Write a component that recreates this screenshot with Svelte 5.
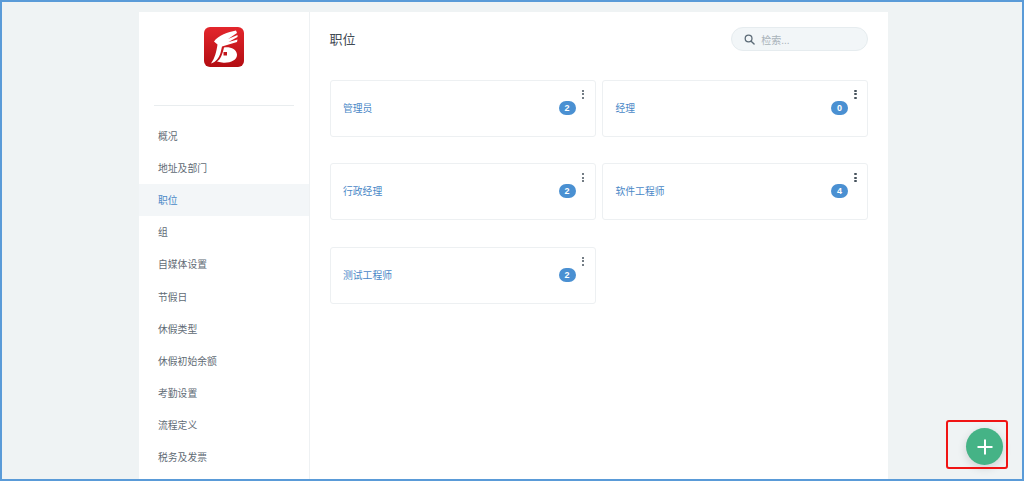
<script>
  const menu = ['概况', '地址及部门', '职位', '组', '自媒体设置', '节假日', '休假类型', '休假初始余额', '考勤设置', '流程定义', '税务及发票'];
  const cards = [
    ['管理员', 2], ['经理', 0], ['行政经理', 2], ['软件工程师', 4], ['测试工程师', 2]
  ];
</script>

<div class="frame">
  <div class="panel">
    <aside class="side">
      <div class="logo-wrap">
        <svg class="logo" viewBox="0 0 40 40" width="40" height="40" aria-hidden="true">
          <defs>
            <linearGradient id="lg" x1="0" y1="0" x2="0" y2="1">
              <stop offset="0" stop-color="#e3262c" />
              <stop offset="1" stop-color="#b30d12" />
            </linearGradient>
          </defs>
          <rect width="40" height="40" rx="6" fill="url(#lg)" />
          <path fill="#fff" d="M32 3.5 C24 5 14 8.5 10 14.5 L13.5 17.5 C12.5 24 11 31 7 36.5 C12 35 15 31 16.5 26 L18 19.5 L33 15 L33.5 12.5 L24.5 15 L33.5 10 L33.5 8 L24 12 L33 6 Z" />
          <path fill="#fff" fill-rule="evenodd" d="M20 20.5 C26 19.5 32.5 22 33 27.5 C33.5 33.5 25 36.5 18 35.5 C16 35.2 14.5 35 13 34.5 C16.5 32.5 18.5 27 20 20.5 Z M19.5 25 L19.5 28.5 L23 28.5 L23 25 Z" />
        </svg>
      </div>
      <div class="divider"></div>
      <nav class="menu">
        {#each menu as item}
          <div class="item" class:active={item === '职位'}>{item}</div>
        {/each}
      </nav>
    </aside>
    <main class="main">
      <header class="head">
        <h1>职位</h1>
        <div class="search">
          <svg viewBox="0 0 12 12" width="11" height="11" aria-hidden="true">
            <circle cx="5" cy="5" r="3.7" fill="none" stroke="#5c6b77" stroke-width="1.4" />
            <path d="M7.8 7.8 L11 11" stroke="#5c6b77" stroke-width="1.5" stroke-linecap="round" />
          </svg>
          <span>检索...</span>
        </div>
      </header>
      <section class="grid">
        {#each cards as [name, count]}
          <div class="card">
            <span class="name">{name}</span>
            <span class="badge">{count}</span>
            <span class="dots"><i></i><i></i><i></i></span>
          </div>
        {/each}
      </section>
    </main>
  </div>
  <button class="fab" aria-label="添加">
    <svg viewBox="0 0 18 18" width="18" height="18" aria-hidden="true">
      <path d="M9 1.5 V16.5 M1.5 9 H16.5" stroke="#fff" stroke-width="2" />
    </svg>
  </button>
  <div class="mark"></div>
</div>

<style>
  :global(body) {
    margin: 0;
  }
  .frame {
    position: relative;
    box-sizing: border-box;
    width: 1024px;
    height: 481px;
    overflow: hidden;
    border: 2px solid #5a9bd8;
    background: #eff3f4;
    padding: 10px 0 0 137px;
    font-family: "Liberation Sans", "Noto Sans CJK SC", sans-serif;
  }
  .panel {
    display: flex;
    width: 748.7px;
    height: 100%;
    background: #fff;
  }
  .side {
    box-sizing: border-box;
    width: 171px;
    flex: none;
    border-right: 1px solid #eef1f3;
  }
  .logo-wrap {
    display: flex;
    justify-content: center;
    padding-top: 15px;
  }
  .logo {
    display: block;
  }
  .divider {
    height: 1px;
    background: #e9edef;
    margin: 38px 15px 13.6px 15px;
  }
  .item {
    height: 32.2px;
    line-height: 33px;
    padding-left: 19px;
    font-size: 9.8px;
    color: #5f6b75;
  }
  .item.active {
    background: #f3f6f8;
    color: #4a88c7;
  }
  .main {
    flex: 1;
    padding: 0 20px 0 19.5px;
    min-width: 0;
  }
  .head {
    display: flex;
    justify-content: space-between;
    align-items: center;
    height: 52px;
    margin-bottom: 15.8px;
  }
  h1 {
    margin: 0;
    font-size: 13px;
    font-weight: 400;
    color: #3f4a54;
  }
  .search {
    box-sizing: border-box;
    display: flex;
    align-items: center;
    gap: 6.5px;
    width: 137px;
    height: 24px;
    margin-top: 2px;
    padding-left: 12px;
    border: 1px solid #e6ecef;
    border-radius: 12px;
    background: #f2f6f8;
    font-size: 10px;
    color: #a9b3ba;
  }
  .grid {
    display: grid;
    grid-template-columns: 266px 266px;
    grid-auto-rows: 57px;
    column-gap: 6.5px;
    row-gap: 26.5px;
  }
  .card {
    position: relative;
    box-sizing: border-box;
    display: flex;
    align-items: center;
    justify-content: space-between;
    padding: 0 19px 1px 12.5px;
    border: 1px solid #edf0f2;
    border-radius: 3px;
    background: #fff;
  }
  .name {
    font-size: 9.8px;
    color: #4a88c7;
  }
  .badge {
    box-sizing: border-box;
    width: 17px;
    height: 14px;
    line-height: 14px;
    border-radius: 7px;
    background: #4a90d2;
    color: #fff;
    font-size: 9px;
    font-weight: 700;
    text-align: center;
  }
  .dots {
    position: absolute;
    top: 9px;
    right: 10.5px;
    display: flex;
    flex-direction: column;
    gap: 1.2px;
  }
  .dots i {
    display: block;
    width: 2.2px;
    height: 2.2px;
    border-radius: 50%;
    background: #46525c;
  }
  .fab {
    position: absolute;
    left: 964px;
    top: 426px;
    display: flex;
    align-items: center;
    justify-content: center;
    width: 37px;
    height: 37px;
    padding: 0;
    border: none;
    border-radius: 50%;
    background: #45b386;
    box-shadow: 0 3px 10px rgba(0, 0, 0, 0.14);
  }
  .mark {
    position: absolute;
    left: 944px;
    top: 418px;
    width: 62px;
    height: 49px;
    box-sizing: border-box;
    border: 2px solid #f01414;
    border-radius: 3px;
    pointer-events: none;
  }
</style>
